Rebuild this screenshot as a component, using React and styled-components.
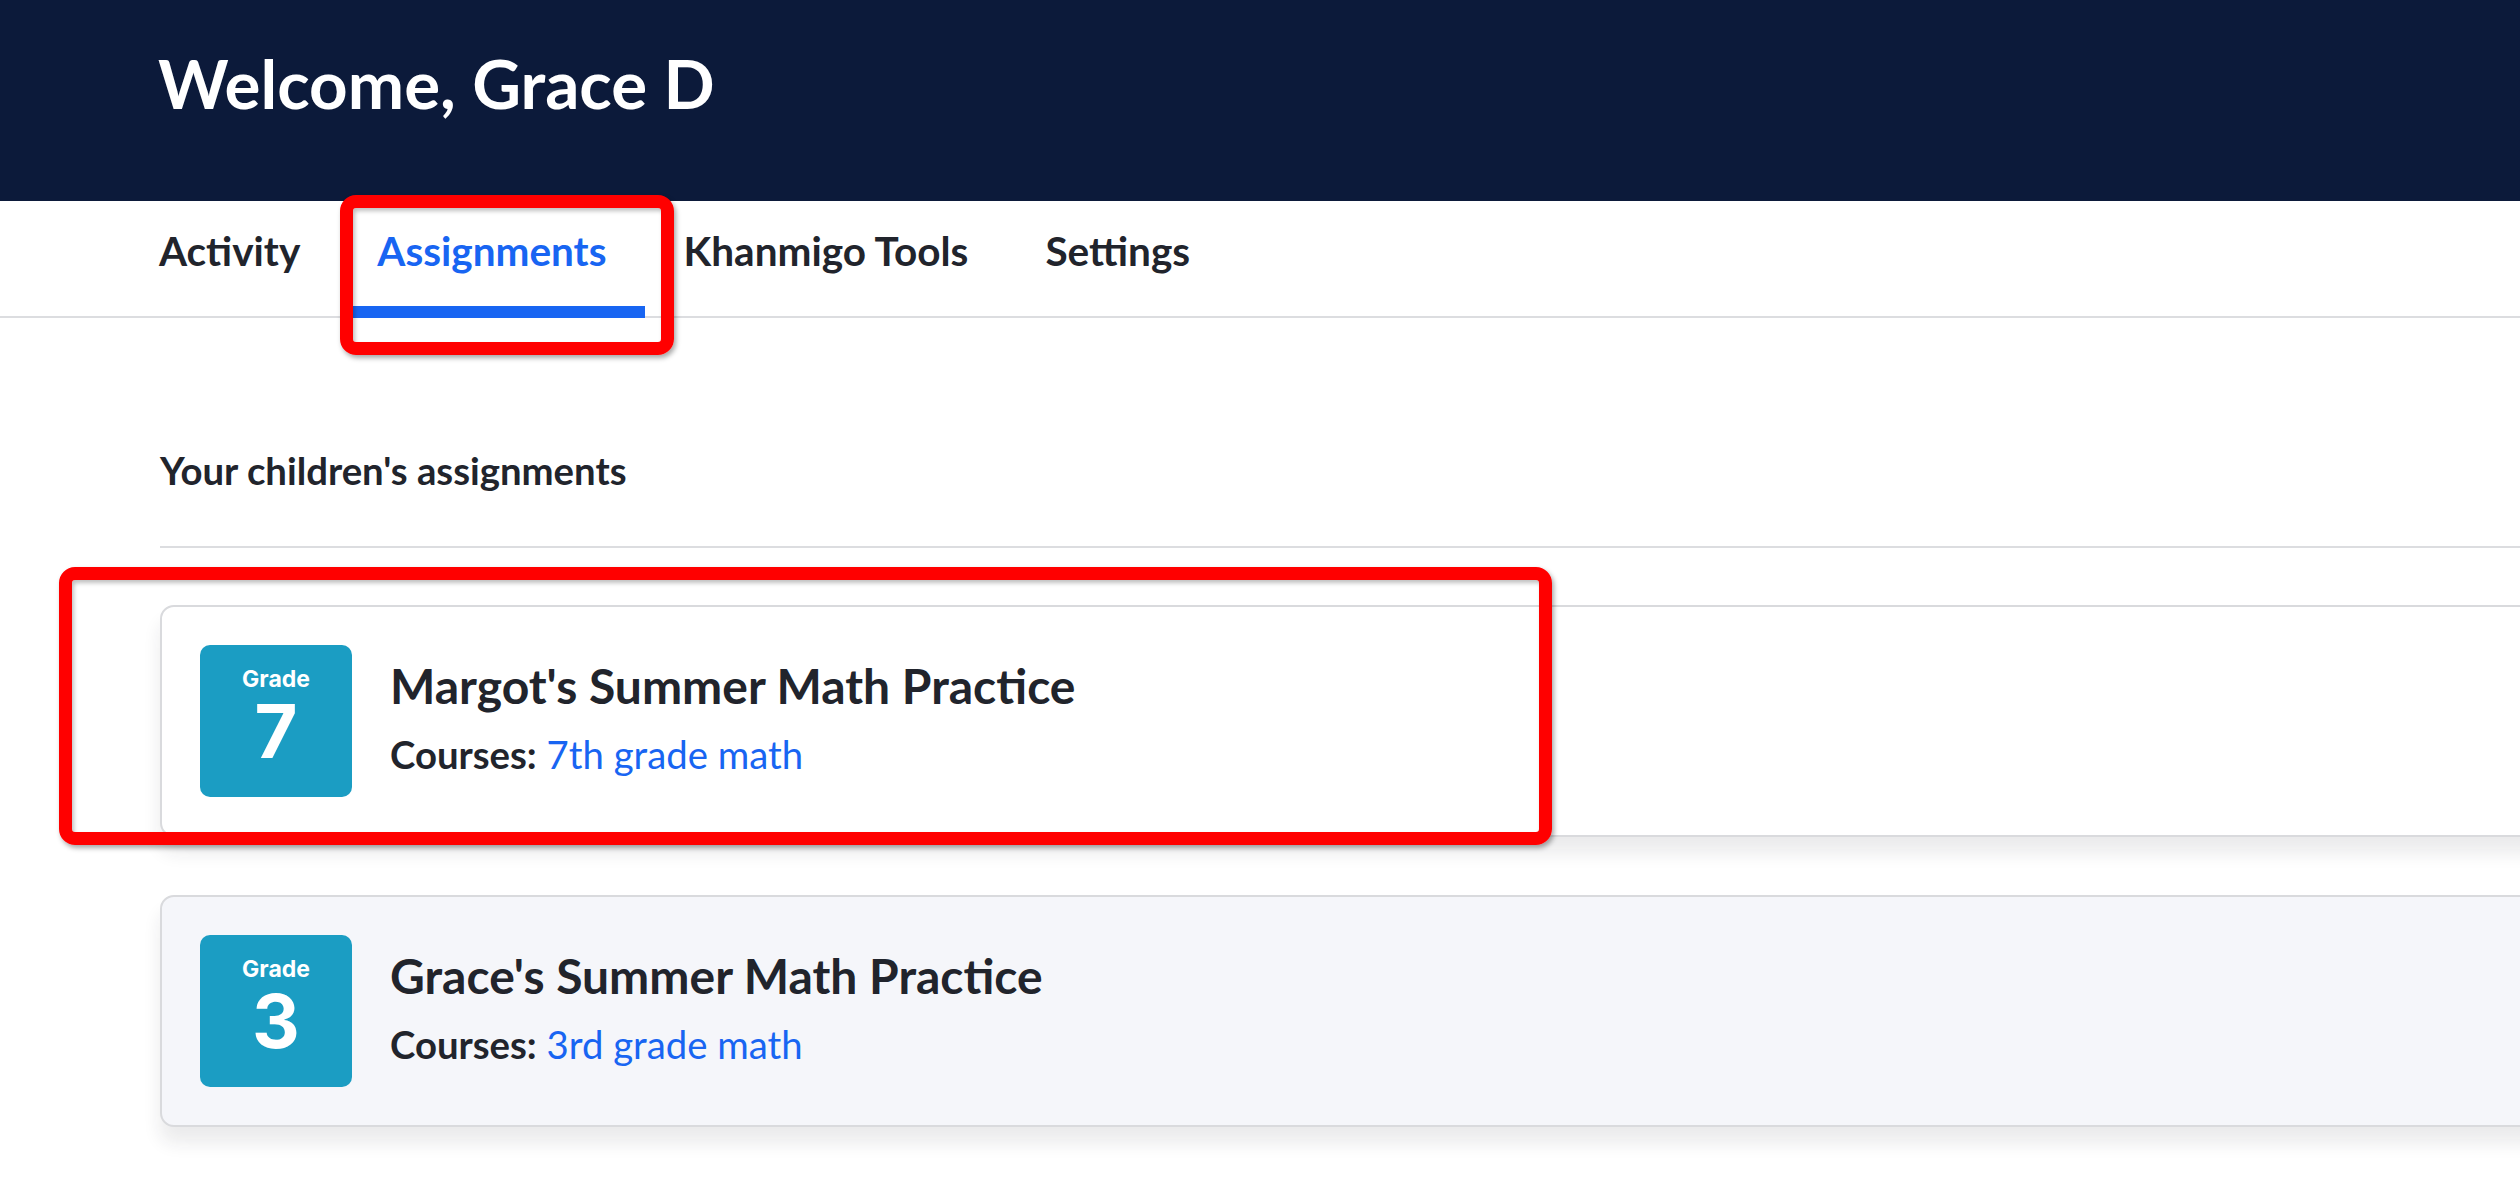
import React from "react";
import styled, { createGlobalStyle } from "styled-components";

const Global = createGlobalStyle`
  html, body {
    margin: 0;
    padding: 0;
    background: #ffffff;
    overflow: hidden;
  }
  body {
    font-family: Lato, "Liberation Sans", sans-serif;
    color: #21242c;
  }
  * { box-sizing: border-box; }
`;

const Page = styled.div`
  position: relative;
  width: 100%;
  min-height: 1186px;
  overflow: hidden;
`;

const Header = styled.header`
  height: 201px;
  background: #0c1a3a;
  padding: 50px 0 0 158px;
`;

const Welcome = styled.h1`
  margin: 0;
  font-family: Lato, sans-serif;
  font-weight: 700;
  font-size: 67.3px;
  line-height: 1;
  color: #ffffff;
`;

const TabBar = styled.nav`
  height: 117px;
  border-bottom: 2px solid #dcdde0;
  display: flex;
  gap: 77px;
  padding-left: 159px;
`;

const Tab = styled.a`
  position: relative;
  display: block;
  padding-top: 30px;
  font-family: Lato, sans-serif;
  font-weight: 700;
  font-size: 40.5px;
  line-height: 1;
  color: ${(p) => (p.$active ? "#1865f2" : "#21242c")};
  text-decoration: none;

  &::after {
    content: "";
    display: ${(p) => (p.$active ? "block" : "none")};
    position: absolute;
    left: -27px;
    right: -39px;
    bottom: -2px;
    height: 12px;
    background: #1865f2;
  }
`;

const Main = styled.main`
  padding: 130px 0 0 160px;
  margin-right: -80px;
`;

const SectionTitle = styled.h2`
  margin: 0;
  font-family: Lato, sans-serif;
  font-weight: 700;
  font-size: 38.3px;
  line-height: 1.2;
  color: #21242c;
  padding-bottom: 52px;
  border-bottom: 2px solid #dcdde0;
`;

const CardList = styled.div`
  display: flex;
  flex-direction: column;
  gap: 58px;
  padding-top: 57px;
`;

const Card = styled.div`
  display: flex;
  gap: 38px;
  padding: 38px;
  border: 2px solid #d9dadd;
  border-radius: 14px;
  background: ${(p) => (p.$muted ? "#f5f6fa" : "#ffffff")};
  box-shadow: 0 16px 18px rgba(33, 36, 44, 0.09);
`;

const Badge = styled.div`
  width: 152px;
  height: 152px;
  flex: none;
  border-radius: 10px;
  background: #1b9dc3;
  color: #ffffff;
  display: flex;
  flex-direction: column;
  align-items: center;
  padding-top: 21px;
  font-family: Inter, "Noto Sans", sans-serif;
  font-weight: 700;
`;

const BadgeLabel = styled.span`
  font-size: 23px;
  line-height: 1.2;
`;

const BadgeNumber = styled.span`
  font-size: 74px;
  line-height: 1;
`;

const CardText = styled.div`
  display: flex;
  flex-direction: column;
  padding-top: 12px;
`;

const CardTitle = styled.h3`
  margin: 0;
  font-family: Lato, sans-serif;
  font-weight: 700;
  font-size: 48px;
  line-height: 1.2;
  color: #21242c;
`;

const Courses = styled.div`
  margin-top: 17px;
  font-family: Lato, sans-serif;
  font-size: 38.3px;
  line-height: 1.2;
  color: #21242c;
`;

const CoursesLabel = styled.span`
  font-weight: 700;
`;

const CourseLink = styled.a`
  color: #1865f2;
  text-decoration: none;
  font-weight: 400;
`;

const Highlight = styled.div`
  position: absolute;
  left: ${(p) => p.$x}px;
  top: ${(p) => p.$y}px;
  width: ${(p) => p.$w}px;
  height: ${(p) => p.$h}px;
  border: 13px solid #ff0000;
  border-radius: 16px;
  box-shadow: 2px 3px 5px rgba(0, 0, 0, 0.35), inset 2px 3px 4px rgba(0, 0, 0, 0.25);
  pointer-events: none;
`;

const assignments = [
  { grade: 7, name: "Margot's Summer Math Practice", course: "7th grade math" },
  { grade: 3, name: "Grace's Summer Math Practice", course: "3rd grade math", muted: true },
];

export default function App() {
  return (
    <Page>
      <Global />
      <Header>
        <Welcome>Welcome, Grace D</Welcome>
      </Header>
      <TabBar>
        <Tab>Activity</Tab>
        <Tab $active>Assignments</Tab>
        <Tab>Khanmigo Tools</Tab>
        <Tab>Settings</Tab>
      </TabBar>
      <Main>
        <SectionTitle>Your children's assignments</SectionTitle>
        <CardList>
          {assignments.map((a) => (
            <Card key={a.name} $muted={a.muted}>
              <Badge>
                <BadgeLabel>Grade</BadgeLabel>
                <BadgeNumber>{a.grade}</BadgeNumber>
              </Badge>
              <CardText>
                <CardTitle>{a.name}</CardTitle>
                <Courses>
                  <CoursesLabel>Courses:</CoursesLabel>{" "}
                  <CourseLink>{a.course}</CourseLink>
                </Courses>
              </CardText>
            </Card>
          ))}
        </CardList>
      </Main>
      <Highlight $x={340} $y={195} $w={334} $h={160} />
      <Highlight $x={59} $y={567} $w={1493} $h={278} />
    </Page>
  );
}
